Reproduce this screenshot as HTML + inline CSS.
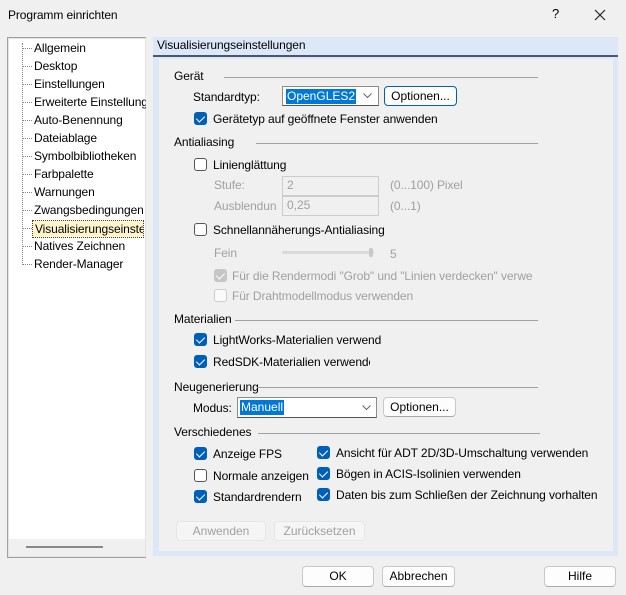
<!DOCTYPE html>
<html><head><meta charset="utf-8"><style>
*{box-sizing:border-box;margin:0;padding:0}
body{width:626px;height:595px;background:#f0f0f0;font-family:"Liberation Sans",sans-serif;font-size:12px;color:#000;position:relative;overflow:hidden}
.a{position:absolute;white-space:nowrap;line-height:14px;letter-spacing:-0.1px}
.g{color:#a0a0a0}
.cb{position:absolute;width:13px;height:13px;border:1px solid #555;border-radius:3px;background:#fff}
.cb.on{background:#005fb8;border-color:#005fb8}
.cb.on::after{content:"";position:absolute;left:3px;top:1px;width:4px;height:7px;border:solid #fff;border-width:0 1.5px 1.5px 0;transform:rotate(45deg)}
.cb.dis{border-color:#ccc;background:#fafafa}
.cb.dison{background:#c6c6c6;border-color:#c6c6c6}
.cb.dison::after{content:"";position:absolute;left:3px;top:1px;width:4px;height:7px;border:solid #fff;border-width:0 1.5px 1.5px 0;transform:rotate(45deg)}
.ln{position:absolute;height:1px;background:#a0a0a0}
.btn{position:absolute;border:1px solid #c8c8c8;border-bottom-color:#aaa;border-radius:4px;background:#fdfdfd;text-align:center;line-height:18px}
.inp{position:absolute;background:#fff;border:1px solid #8c8c8c;border-bottom:1px solid #555}
.sel{position:absolute;background:#0078d7;color:#fff;line-height:15px;padding:0 1px}
.dis-inp{position:absolute;background:#f0f0f0;border:1px solid #ccc;color:#a0a0a0;line-height:17px;padding-left:4px}
.tree .a{left:34px}
.h{position:absolute;left:22px;width:10px;border-top:1px dotted #888}
</style></head><body>
<div class="a" style="left:8px;top:8px">Programm einrichten</div>
<div class="a" style="left:552px;top:7px;font-size:13px">?</div>
<svg style="position:absolute;left:594px;top:9px" width="12" height="12"><path d="M1 1L11 11M11 1L1 11" stroke="#222" stroke-width="1.2"/></svg>

<!-- tree -->
<div style="position:absolute;left:7px;top:37px;width:140px;height:521px;border:1px solid #a0a0a0;background:#fff;box-shadow:inset 0 0 0 1px #e3e3e3"></div>
<div style="position:absolute;left:9px;top:539px;width:136px;height:17px;background:#f0f0f0"></div>
<div style="position:absolute;left:26px;top:546px;width:77px;height:2px;background:#888"></div>
<div style="position:absolute;left:22px;top:43px;height:222px;border-left:1px dotted #888"></div>
<div class="tree">
<div class="h" style="top:48px"></div><div class="a" style="top:41px">Allgemein</div>
<div class="h" style="top:66px"></div><div class="a" style="top:59px">Desktop</div>
<div class="h" style="top:84px"></div><div class="a" style="top:77px">Einstellungen</div>
<div class="h" style="top:102px"></div><div class="a" style="top:95px">Erweiterte Einstellung</div>
<div class="h" style="top:120px"></div><div class="a" style="top:113px">Auto-Benennung</div>
<div class="h" style="top:138px"></div><div class="a" style="top:131px">Dateiablage</div>
<div class="h" style="top:156px"></div><div class="a" style="top:149px">Symbolbibliotheken</div>
<div class="h" style="top:174px"></div><div class="a" style="top:167px">Farbpalette</div>
<div class="h" style="top:192px"></div><div class="a" style="top:185px">Warnungen</div>
<div class="h" style="top:210px"></div><div class="a" style="top:203px">Zwangsbedingungen</div>
<div class="h" style="top:228px"></div><div class="a" style="top:220px;left:32px;padding:1px 2px;background:#fff4cc;border:1px dotted #444;width:112px;overflow:hidden">Visualisierungseinste</div>
<div class="h" style="top:246px"></div><div class="a" style="top:239px">Natives Zeichnen</div>
<div class="h" style="top:264px"></div><div class="a" style="top:257px">Render-Manager</div>
</div>
<div style="position:absolute;left:146px;top:37px;width:7px;height:521px;background:#f0f0f0"></div>

<!-- right panel -->
<div style="position:absolute;left:153px;top:37px;width:465px;height:519px;background:#dce8f8"></div>
<div style="position:absolute;left:153px;top:55px;width:465px;height:2px;background:#4a5670"></div>
<div style="position:absolute;left:159px;top:59px;width:454px;height:492px;background:#f0f0f0"></div>
<div class="a" style="left:157px;top:38px">Visualisierungseinstellungen</div>

<div class="a" style="left:174px;top:69px">Gerät</div><div class="ln" style="left:224px;top:77px;width:314px"></div>
<div class="a" style="left:193px;top:90px">Standardtyp:</div>
<div class="inp" style="left:282px;top:86px;width:97px;height:20px"></div>
<div class="sel" style="left:286px;top:89px">OpenGLES2</div>
<svg style="position:absolute;left:363px;top:93px" width="9" height="6"><path d="M0.5 0.5L4.5 4.5L8.5 0.5" fill="none" stroke="#666"/></svg>
<div class="btn" style="left:384px;top:86px;width:73px;height:20px;border-color:#005fb8">Optionen...</div>
<div class="cb on" style="left:194px;top:112px"></div><div class="a" style="left:213px;top:112px">Gerätetyp auf geöffnete Fenster anwenden</div>

<div class="a" style="left:174px;top:135px">Antialiasing</div><div class="ln" style="left:256px;top:143px;width:282px"></div>
<div class="cb" style="left:194px;top:158px"></div><div class="a" style="left:213px;top:158px">Linienglättung</div>
<div class="a g" style="left:214px;top:178px">Stufe:</div>
<div class="dis-inp" style="left:282px;top:176px;width:97px;height:20px">2</div>
<div class="a g" style="left:390px;top:178px">(0...100) Pixel</div>
<div class="a g" style="left:214px;top:199px">Ausblendun</div>
<div class="dis-inp" style="left:282px;top:196px;width:97px;height:20px">0,25</div>
<div class="a g" style="left:390px;top:199px">(0...1)</div>
<div class="cb" style="left:194px;top:223px"></div><div class="a" style="left:213px;top:223px">Schnellannäherungs-Antialiasing</div>
<div class="a g" style="left:214px;top:246px">Fein</div>
<div style="position:absolute;left:282px;top:251px;width:92px;height:3px;background:#dadada;border-radius:2px"></div>
<div style="position:absolute;left:369px;top:248px;width:4px;height:9px;background:#c8c8c8;border-radius:2px"></div>
<div class="a g" style="left:390px;top:247px">5</div>
<div class="cb dison" style="left:214px;top:269px"></div><div class="a g" style="left:232px;top:269px">Für die Rendermodi "Grob" und "Linien verdecken" verwe</div>
<div class="cb dis" style="left:214px;top:289px"></div><div class="a g" style="left:232px;top:289px">Für Drahtmodellmodus verwenden</div>

<div class="a" style="left:174px;top:312px">Materialien</div><div class="ln" style="left:235px;top:320px;width:303px"></div>
<div class="cb on" style="left:194px;top:333px"></div><div class="a" style="left:213px;top:333px">LightWorks-Materialien verwend</div>
<div class="cb on" style="left:194px;top:355px"></div><div class="a" style="left:213px;top:355px;width:157px;overflow:hidden">RedSDK-Materialien verwenden</div>

<div class="a" style="left:174px;top:380px;width:84px;overflow:hidden">Neugenerierung</div><div class="ln" style="left:257px;top:387px;width:281px"></div>
<div class="a" style="left:193px;top:401px">Modus:</div>
<div class="inp" style="left:237px;top:397px;width:140px;height:21px"></div>
<div class="sel" style="left:240px;top:400px">Manuell</div>
<svg style="position:absolute;left:362px;top:405px" width="9" height="6"><path d="M0.5 0.5L4.5 4.5L8.5 0.5" fill="none" stroke="#666"/></svg>
<div class="btn" style="left:383px;top:397px;width:73px;height:20px">Optionen...</div>

<div class="a" style="left:174px;top:425px">Verschiedenes</div><div class="ln" style="left:258px;top:433px;width:282px"></div>
<div class="cb on" style="left:194px;top:447px"></div><div class="a" style="left:213px;top:447px">Anzeige FPS</div>
<div class="cb" style="left:194px;top:469px"></div><div class="a" style="left:213px;top:469px">Normale anzeigen</div>
<div class="cb on" style="left:194px;top:490px"></div><div class="a" style="left:213px;top:490px">Standardrendern</div>
<div class="cb on" style="left:317px;top:446px"></div><div class="a" style="left:336px;top:446px">Ansicht für ADT 2D/3D-Umschaltung verwenden</div>
<div class="cb on" style="left:317px;top:467px"></div><div class="a" style="left:336px;top:467px">Bögen in ACIS-Isolinien verwenden</div>
<div class="cb on" style="left:317px;top:488px"></div><div class="a" style="left:336px;top:488px">Daten bis zum Schließen der Zeichnung vorhalten</div>

<div class="btn g" style="left:176px;top:521px;width:90px;height:20px;border-color:#e6e6e6;background:#f5f5f5">Anwenden</div>
<div class="btn g" style="left:274px;top:521px;width:91px;height:20px;border-color:#e6e6e6;background:#f5f5f5">Zurücksetzen</div>

<div class="btn" style="left:302px;top:566px;width:72px;height:21px;line-height:19px">OK</div>
<div class="btn" style="left:382px;top:566px;width:73px;height:21px;line-height:19px">Abbrechen</div>
<div class="btn" style="left:544px;top:566px;width:72px;height:21px;line-height:19px">Hilfe</div>
</body></html>
